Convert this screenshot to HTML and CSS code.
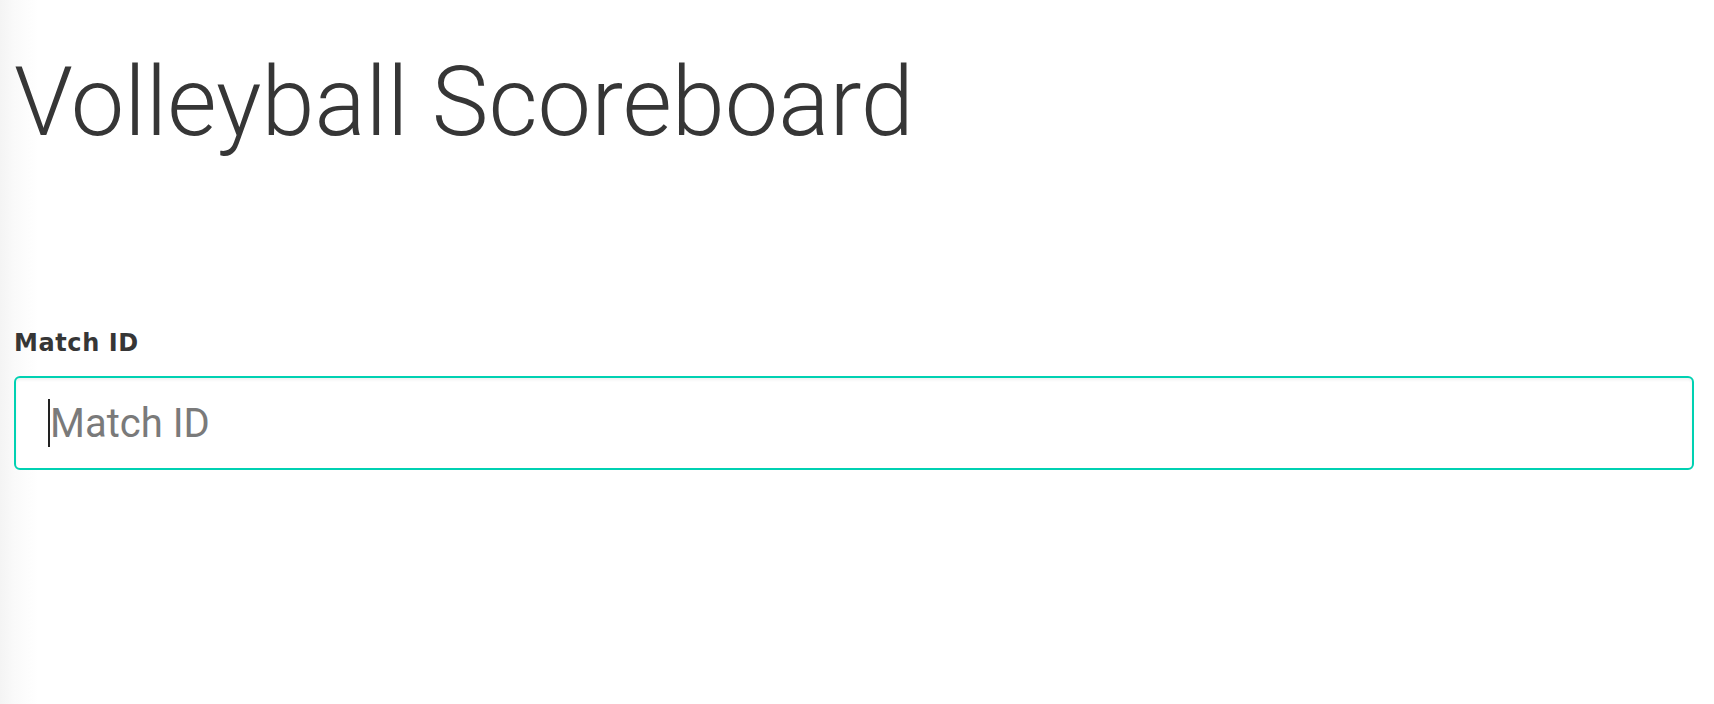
FILE: index.html
```html
<!DOCTYPE html>
<html>
<head>
<meta charset="utf-8">
<link rel="stylesheet" href="styles.css">
</head>
<body>
<main class="page">
  <h1 class="title">Volleyball Scoreboard</h1>
  <div class="field">
    <label class="label" for="match">Match ID</label>
    <div class="control">
      <span class="caret"></span>
      <input class="input" id="match" type="text" placeholder="Match ID">
    </div>
  </div>
</main>
</body>
</html>
```
FILE: styles.css
```css
html, body {
  margin: 0;
  padding: 0;
  height: 100%;
}
body {
  background: linear-gradient(to right, #f4f4f4 0px, #fafafa 15px, #ffffff 38px);
  font-family: Roboto, "Liberation Sans", sans-serif;
  color: #363636;
}
.page {
  padding: 42px 20px 0 14px;
  display: flex;
  flex-direction: column;
}
.title {
  margin: 0;
  font-size: 95.5px;
  font-weight: 300;
  line-height: 120px;
  color: #363636;
}
.field {
  margin-top: 166px;
  display: flex;
  flex-direction: column;
  gap: 18px;
}
.label {
  font-family: "DejaVu Sans", "Liberation Sans", sans-serif;
  font-size: 24px;
  font-weight: 700;
  line-height: 30px;
  letter-spacing: 0.6px;
  color: #363636;
}
.control {
  position: relative;
}
.input {
  box-sizing: border-box;
  width: 100%;
  height: 94px;
  border: 2px solid #00d1b2;
  border-radius: 6px;
  box-shadow: inset 0 2px 3px rgba(10, 10, 10, 0.06);
  padding: 0 0 0 34px;
  font-family: Roboto, "Liberation Sans", sans-serif;
  font-size: 40px;
  font-weight: 400;
  color: #363636;
  outline: none;
  background: #fff;
}
.input::placeholder {
  color: #7a7a7a;
}
.caret {
  position: absolute;
  left: 34px;
  top: 23px;
  width: 2px;
  height: 48px;
  background: #222;
}
```
